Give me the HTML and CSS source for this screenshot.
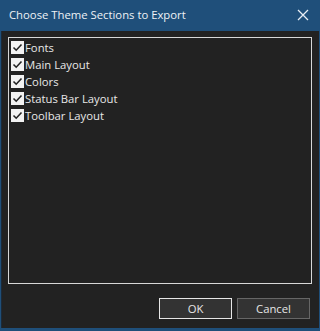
FILE: index.html
```html
<!DOCTYPE html>
<html>
<head>
<meta charset="utf-8">
<link rel="stylesheet" href="styles.css">
</head>
<body>
<div class="window">
  <div class="titlebar">
    <span class="title">Choose Theme Sections to Export</span>
    <svg class="close" width="12" height="12" viewBox="0 0 12 12"><path d="M1 1L11 11M11 1L1 11" stroke="#e8eef5" stroke-width="1.3" fill="none"/></svg>
  </div>
  <div class="body">
    <div class="list">
      <label class="item"><span class="cb"><svg width="13" height="13" viewBox="0 0 13 13"><path d="M2.5 6.5L5.2 9.2L10.5 3.5" stroke="#222" stroke-width="1.6" fill="none"/></svg></span>Fonts</label>
      <label class="item"><span class="cb"><svg width="13" height="13" viewBox="0 0 13 13"><path d="M2.5 6.5L5.2 9.2L10.5 3.5" stroke="#222" stroke-width="1.6" fill="none"/></svg></span>Main Layout</label>
      <label class="item"><span class="cb"><svg width="13" height="13" viewBox="0 0 13 13"><path d="M2.5 6.5L5.2 9.2L10.5 3.5" stroke="#222" stroke-width="1.6" fill="none"/></svg></span>Colors</label>
      <label class="item"><span class="cb"><svg width="13" height="13" viewBox="0 0 13 13"><path d="M2.5 6.5L5.2 9.2L10.5 3.5" stroke="#222" stroke-width="1.6" fill="none"/></svg></span>Status Bar Layout</label>
      <label class="item"><span class="cb"><svg width="13" height="13" viewBox="0 0 13 13"><path d="M2.5 6.5L5.2 9.2L10.5 3.5" stroke="#222" stroke-width="1.6" fill="none"/></svg></span>Toolbar Layout</label>
    </div>
    <div class="buttons">
      <button class="btn default">OK</button>
      <button class="btn">Cancel</button>
    </div>
  </div>
</div>
</body>
</html>
```
FILE: styles.css
```css
html, body {
  margin: 0;
  padding: 0;
  background: #1f4f7a;
}
.window {
  width: 320px;
  height: 331px;
  display: flex;
  flex-direction: column;
  box-sizing: border-box;
  background: #1f4f7a;
  font-family: "Open Sans", "Noto Sans", sans-serif;
  color: #e6e6e6;
}
.titlebar {
  height: 31px;
  display: flex;
  align-items: center;
  justify-content: space-between;
  padding: 0 10px 0 9px;
  flex: none;
}
.title {
  font-size: 11.3px;
  color: #eef2f6;
  position: relative;
  top: -1px;
}
.close {
  margin-right: 1px;
  position: relative;
  top: -1px;
}
.body {
  flex: 1;
  margin: 0 1px 3px 1px;
  background: #222222;
  border-left: 1px solid #1c2a38;
  display: flex;
  flex-direction: column;
  padding: 6px 7px 0 6px;
  box-sizing: border-box;
  min-height: 0;
}
.list {
  height: 247px;
  border: 1px solid #d8d8d8;
  box-sizing: border-box;
  padding: 1px 2px;
  display: flex;
  flex-direction: column;
}
.item {
  display: flex;
  align-items: center;
  height: 17px;
  font-size: 11.3px;
  color: #e8e8e8;
}
.cb {
  width: 13px;
  height: 13px;
  background: #f2f2f2;
  margin-right: 1px;
  display: flex;
}
.buttons {
  display: flex;
  justify-content: flex-end;
  gap: 5px;
  margin-top: 14px;
  padding-right: 2px;
}
.btn {
  width: 73px;
  height: 21px;
  background: #333333;
  border: 1px solid #666666;
  color: #e6e6e6;
  font-family: "Open Sans", "Noto Sans", sans-serif;
  font-size: 11.3px;
  padding: 0;
}
.btn.default {
  border-color: #e6e6e6;
}
```
